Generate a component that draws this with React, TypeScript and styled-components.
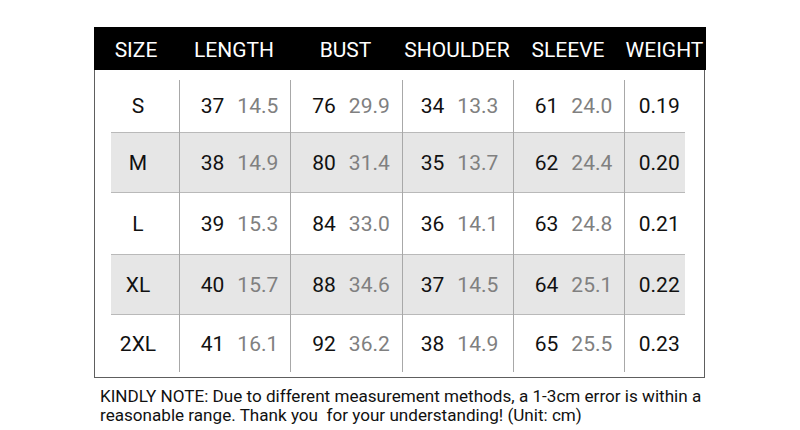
import React from 'react';
import styled, { createGlobalStyle } from 'styled-components';

const GlobalStyle = createGlobalStyle`
    html, body {
        margin: 0;
        padding: 0;
        background: #ffffff;
    }
    body {
        font-family: Roboto, 'Noto Sans', sans-serif;
    }
`;

interface SizeRow {
    size: string;
    length: [number, string];
    bust: [number, string];
    shoulder: [number, string];
    sleeve: [number, string];
    weight: string;
}

const rows: SizeRow[] = [
    { size: 'S', length: [37, '14.5'], bust: [76, '29.9'], shoulder: [34, '13.3'], sleeve: [61, '24.0'], weight: '0.19' },
    { size: 'M', length: [38, '14.9'], bust: [80, '31.4'], shoulder: [35, '13.7'], sleeve: [62, '24.4'], weight: '0.20' },
    { size: 'L', length: [39, '15.3'], bust: [84, '33.0'], shoulder: [36, '14.1'], sleeve: [63, '24.8'], weight: '0.21' },
    { size: 'XL', length: [40, '15.7'], bust: [88, '34.6'], shoulder: [37, '14.5'], sleeve: [64, '25.1'], weight: '0.22' },
    { size: '2XL', length: [41, '16.1'], bust: [92, '36.2'], shoulder: [38, '14.9'], sleeve: [65, '25.5'], weight: '0.23' },
];

const headers = ['SIZE', 'LENGTH', 'BUST', 'SHOULDER', 'SLEEVE', 'WEIGHT'];

const COLUMNS = '85px 111px 112px 111px 111px 1fr';

const Page = styled.div`
    width: 800px;
    height: 430px;
    box-sizing: border-box;
    padding: 27px 0 0 94px;
`;

const Table = styled.div`
    width: 611px;
    box-sizing: border-box;
    border: 1.5px solid #5e5e5e;
    border-top: none;
`;

const HeaderRow = styled.div`
    display: grid;
    grid-template-columns: ${COLUMNS};
    height: 43px;
    margin: 0 -1.5px;
    background: #000000;
    color: #ffffff;
    font-size: 21px;
    align-items: center;
`;

const HeaderCell = styled.div`
    text-align: center;
    white-space: nowrap;
    padding-top: 2px;
`;

const Body = styled.div`
    padding: 10px 0 5px;
`;

const Row = styled.div<{ $shaded: boolean; $height: number }>`
    display: grid;
    grid-template-columns: ${COLUMNS};
    height: ${({ $height }) => $height}px;
    box-sizing: border-box;
    margin-left: -1.5px;
    background: ${({ $shaded }) =>
        $shaded
            ? 'linear-gradient(#b9b9b9, #b9b9b9) 17px 0 / 574px 1px no-repeat, linear-gradient(#b9b9b9, #b9b9b9) 17px 100% / 574px 1px no-repeat, linear-gradient(#e6e6e6, #e6e6e6) 17px 0 / 574px 100% no-repeat'
            : 'none'};
`;

const Cell = styled.div<{ $first?: boolean; $shift?: number }>`
    display: flex;
    align-items: center;
    justify-content: center;
    border-left: ${({ $first }) => ($first ? 'none' : '1px solid #a8a8a8')};
    padding-left: ${({ $shift }) => ($shift && $shift > 0 ? $shift : 0)}px;
    padding-right: ${({ $shift }) => ($shift && $shift < 0 ? -$shift : 0)}px;
    font-size: 21px;
    color: #111111;
    white-space: nowrap;
`;

const Pair = styled.span`
    display: inline-flex;
    gap: 13px;
`;

const Inch = styled.span`
    color: #808080;
`;

const Note = styled.p`
    margin: 9px 0 0 6px;
    width: 612px;
    font-size: 17.1px;
    line-height: 19px;
    color: #111111;
`;

const Measure: React.FC<{ value: [number, string] }> = ({ value }) => (
    <Pair>
        <span>{value[0]}</span>
        <Inch>{value[1]}</Inch>
    </Pair>
);

const rowHeights = [52, 61, 61, 61, 57];

const App: React.FC = () => {
    return (
        <>
            <GlobalStyle />
            <Page>
                <Table>
                    <HeaderRow>
                        {headers.map((h) => (
                            <HeaderCell key={h}>{h}</HeaderCell>
                        ))}
                    </HeaderRow>
                    <Body>
                        {rows.map((r, i) => (
                            <Row key={r.size} $shaded={i % 2 === 1} $height={rowHeights[i]}>
                                <Cell $first $shift={4}>{r.size}</Cell>
                                <Cell $shift={10}><Measure value={r.length} /></Cell>
                                <Cell $shift={10}><Measure value={r.bust} /></Cell>
                                <Cell $shift={4}><Measure value={r.shoulder} /></Cell>
                                <Cell $shift={10}><Measure value={r.sleeve} /></Cell>
                                <Cell $shift={-10}>{r.weight}</Cell>
                            </Row>
                        ))}
                    </Body>
                </Table>
                <Note>
                    KINDLY NOTE: Due to different measurement methods, a 1-3cm error is within a reasonable range. Thank you&nbsp; for your understanding! (Unit: cm)
                </Note>
            </Page>
        </>
    );
};

export default App;
